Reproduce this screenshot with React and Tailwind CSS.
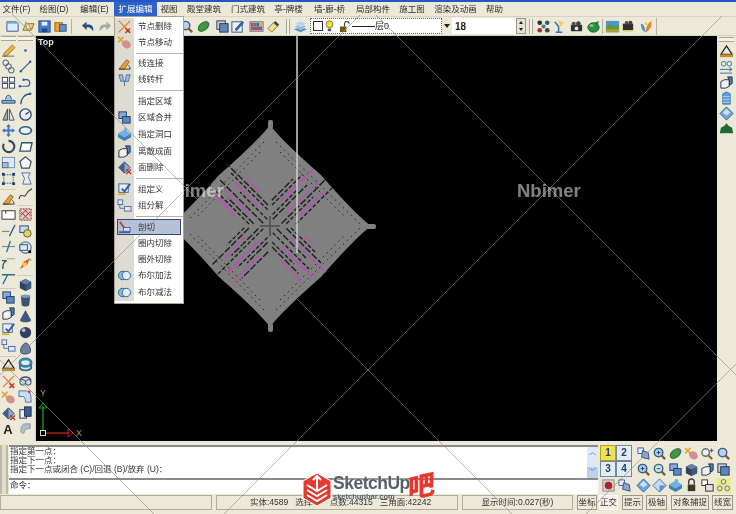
const menus = [
  { label: "文件(F)", w: "w-[33px]" },
  { label: "绘图(D)", w: "w-[42px]" },
  { label: "编辑(E)", w: "w-[39px]" },
  { label: "扩展编辑", w: "w-[43px]", active: true },
  { label: "视图", w: "w-[24px]" },
  { label: "殿堂建筑", w: "w-[46px]" },
  { label: "门式建筑", w: "w-[42px]" },
  { label: "亭-牌楼", w: "w-[39px]" },
  { label: "墙-廊-桥", w: "w-[43px]" },
  { label: "局部构件", w: "w-[44px]" },
  { label: "施工图", w: "w-[34px]" },
  { label: "渲染及动画", w: "w-[53px]" },
  { label: "帮助", w: "w-[25px]" },
];

const ICONS = {
  doc: <><path d="M2 3h10l2 2v8H2z" fill="#dfeafa" stroke="#33559a" /><path d="M2 3h12v2H2z" fill="#7fa3dc" /></>,
  open: <><path d="M2 12l3-7h9l-3 7z" fill="#f0d070" stroke="#8a7030" /><path d="M5 3l6 7-5 1z" fill="#e8e8d8" stroke="#a09060" /></>,
  save: <><rect x="2" y="2" width="12" height="12" fill="#3f7fd0" stroke="#23508f" /><rect x="5" y="3" width="6" height="4" fill="#e8eef8" /><rect x="5" y="10" width="6" height="4" fill="#1f4a88" /></>,
  print: <><rect x="2" y="4" width="8" height="9" fill="#f0a030" stroke="#a06010" /><rect x="7" y="6" width="7" height="7" fill="#5f8fd0" stroke="#2f5590" /></>,
  undo: <path d="M13 13c1-5-2-8-7-7V3L1 7l5 5V9c3-1 5 1 7 4z" fill="#24508f" />,
  redo: <path d="M3 13c-1-5 2-8 7-7V3l5 4-5 5V9c-3-1-5 1-7 4z" fill="#a8a8a0" />,
  zoom: <><circle cx="7" cy="7" r="4.5" fill="#b8d0f0" stroke="#44607f" strokeWidth="1.5" /><path d="M10 10l4 4" stroke="#806030" strokeWidth="2.4" /></>,
  zoomplus: <><circle cx="7" cy="7" r="4.5" fill="#b8d0f0" stroke="#2f5f7f" strokeWidth="1.5" /><path d="M5 7h4M7 5v4" stroke="#204060" /><path d="M10 10l4 4" stroke="#806030" strokeWidth="2.4" /></>,
  zoomminus: <><circle cx="7" cy="7" r="4.5" fill="#c8e0f0" stroke="#2f6f7f" strokeWidth="1.5" /><path d="M5 7h4" stroke="#b03020" /><path d="M10 10l4 4" stroke="#806030" strokeWidth="2.4" /></>,
  zoomstar: <><circle cx="6" cy="7" r="4" fill="#eef2e8" stroke="#607080" strokeWidth="1.5" /><path d="M9 10l4 4" stroke="#806030" strokeWidth="2.2" /><path d="M12 2l1 2 2 .5-2 1-.5 2-1-2-2-.5 2-1z" fill="#4060a0" /></>,
  leaf: <><ellipse cx="8" cy="8" rx="6.5" ry="4" transform="rotate(-40 8 8)" fill="#3f9a3f" stroke="#1f6a2f" /><path d="M11 3l3 3" stroke="#7050c0" strokeWidth="2" /></>,
  windows: <><rect x="2" y="2" width="9" height="9" fill="#c8d0e0" stroke="#303848" /><rect x="5" y="5" width="9" height="9" fill="#5f86b8" stroke="#23344f" /></>,
  edit: <><rect x="2" y="3" width="11" height="11" fill="#eef2f8" stroke="#2f4f88" /><path d="M5 11L13 2l2 2-8 9z" fill="#2f5fa8" /></>,
  palette: <><rect x="1" y="3" width="14" height="10" fill="#e0e0d0" stroke="#666" /><path d="M2 4h3v4H2z" fill="#d03090" /><path d="M5 4h3v4H5z" fill="#30a050" /><path d="M8 4h3v4H8z" fill="#3060c0" /><path d="M11 4h3v4h-3z" fill="#e0b030" /><path d="M2 8h12v4H2z" fill="#a05080" /></>,
  brush: <><path d="M10 2l4 4-2 2-4-4z" fill="#404040" /><path d="M8 4l4 4-6 6-4-4z" fill="#f0e090" stroke="#807040" /></>,
  layers: <><path d="M8 8l7 3-7 3-7-3z" fill="#5f8fc0" /><path d="M8 5l7 3-7 3-7-3z" fill="#8fb4dc" stroke="#fff" strokeWidth=".5" /><path d="M8 2l7 3-7 3-7-3z" fill="#b8d0e8" stroke="#fff" strokeWidth=".5" /></>,
  nodes: <><circle cx="4" cy="4" r="2.5" fill="#303030" /><circle cx="12" cy="4" r="2.5" fill="#306070" /><circle cx="4" cy="12" r="2.5" fill="#a03030" /><circle cx="12" cy="12" r="2.5" fill="#404040" /><circle cx="8" cy="8" r="2.2" fill="#2f8f6f" /></>,
  lamp: <><path d="M4 14h7M7 14V8L3 3" stroke="#4070b0" strokeWidth="1.6" fill="none" /><path d="M6 1l7 3-4 4z" fill="#f0d050" /></>,
  camera: <><rect x="2" y="6" width="12" height="7" rx="1" fill="#303030" /><circle cx="5" cy="5" r="2.2" fill="#505050" /><circle cx="10" cy="5" r="2.5" fill="#404040" /><circle cx="8" cy="10" r="2" fill="#e0e0e0" /></>,
  teapot: <><ellipse cx="8" cy="9" rx="6" ry="5" fill="#2f8f45" stroke="#13602a" /><path d="M9 4l5-2-2 5z" fill="#1f7a3a" /><ellipse cx="6" cy="7" rx="2" ry="1.5" fill="#7fd090" /></>,
  landscape: <><rect x="1" y="2" width="14" height="12" fill="#4f95d0" /><path d="M1 8l5-3 4 3 5-2v8H1z" fill="#5f9a40" /><path d="M1 11h14v3H1z" fill="#b0a040" /></>,
  camera2: <><rect x="2" y="5" width="11" height="7" fill="#303030" /><circle cx="6" cy="4" r="2" fill="#505050" /><circle cx="10" cy="4" r="2.2" fill="#404040" /><path d="M3 13h11" stroke="#f0e070" strokeWidth="1.5" /></>,
  wing: <><path d="M2 5c3 0 4 3 5 9-3-1-5-4-5-9z" fill="#3fa0d0" /><path d="M7 14c0-5 2-9 6-12 1 5-1 10-6 12z" fill="#f08030" /><path d="M6 5l2-2 1 4z" fill="#e0c030" /></>,
  pencil: <><path d="M3 11L12 2l3 3-9 9H3z" fill="#e8b040" stroke="#806020" strokeWidth=".7" /><path d="M1 14h13" stroke="#666" /></>,
  circles: <><circle cx="5" cy="4" r="3" fill="none" stroke="#30506f" /><circle cx="8" cy="8" r="3" fill="none" stroke="#30506f" /><circle cx="11" cy="12" r="3" fill="none" stroke="#30506f" /></>,
  grid: <><rect x="1.5" y="2.5" width="5.5" height="5" fill="#fff" stroke="#304860" /><rect x="9" y="2.5" width="5.5" height="5" fill="#fff" stroke="#304860" /><rect x="1.5" y="9" width="5.5" height="5" fill="#fff" stroke="#304860" /><rect x="9" y="9" width="5.5" height="5" fill="#fff" stroke="#304860" /></>,
  mount: <><path d="M5 9c0-6 6-6 6 0" fill="#a0c4e8" stroke="#30507f" /><path d="M1 10h14v3H1z" fill="#88acd4" stroke="#30507f" /></>,
  mirror: <><path d="M7 2v12H2z" fill="#9aa8b8" stroke="#405060" /><path d="M9 2v12h5z" fill="#e8e8e0" stroke="#405060" /></>,
  move: <path d="M8 1l2.5 3H9v3h3V5.500l3 2.500-3 2.500V9H9v3h1.500L8 15l-2.500-3H7V9H4v1.500L1 8l3-2.500V7h3V4H5.500z" fill="#3f77bf" />,
  rotate: <path d="M8 2a6 6 0 1 1-5 3" fill="none" stroke="#304860" strokeWidth="2.2" />,
  scale: <><rect x="1.5" y="2.5" width="13" height="11" fill="#dfe8f4" stroke="#7090b8" /><rect x="1.5" y="8" width="6" height="5.500" fill="#a8bcd8" stroke="#5070a0" /></>,
  dotsq: <><rect x="3" y="4" width="10" height="9" fill="none" stroke="#2f5f9f" strokeDasharray="2 1" /><rect x="1" y="2" width="3" height="3" fill="#20406f" /><rect x="12" y="2" width="3" height="3" fill="#20406f" /><rect x="1" y="12" width="3" height="3" fill="#20406f" /><rect x="12" y="12" width="3" height="3" fill="#20406f" /></>,
  pencil2: <><path d="M2 14l8-10 3 2-5 8z" fill="#e8a030" stroke="#705010" strokeWidth=".7" /><path d="M2 14h12c0-2-1-3-2-4" fill="none" stroke="#333" /></>,
  rectw: <><rect x="1" y="4" width="14" height="9" fill="#fff" stroke="#303030" /><path d="M5 4v3" stroke="#303030" /></>,
  trim: <><path d="M1 9h8" stroke="#7090a0" strokeWidth="1.3" /><path d="M15 2L9 14" stroke="#2f5f8f" strokeWidth="1.3" /></>,
  ext: <><path d="M1 8h14" stroke="#7090a0" strokeWidth="1.3" /><path d="M10 2L6 14" stroke="#2f5f8f" strokeWidth="1.3" /></>,
  fillet: <><path d="M1 6h5C2 8 2 11 2 15" fill="none" stroke="#2f5f6f" strokeWidth="1.5" /><path d="M6 4h9" stroke="#a0a0a0" /></>,
  chamfer: <><path d="M1 4h14M7 4L2 14" fill="none" stroke="#2f6f8f" strokeWidth="1.4" /></>,
  blocks: <><rect x="2" y="2" width="8" height="7" fill="#88aadc" stroke="#20406f" /><rect x="6" y="7" width="8" height="7" fill="#5f86c0" stroke="#20406f" /></>,
  boxes: <><path d="M2 7l4-2h5v7l-4 2H2z" fill="#f0f0f0" stroke="#20304f" /><path d="M9 2h5v7l-3 2V5z" fill="#5080b0" stroke="#20304f" /></>,
  group: <><rect x="2" y="2" width="10" height="9" fill="#e8eef8" stroke="#4060a0" /><path d="M5 7l3 3 6-8" fill="none" stroke="#2f5fa8" strokeWidth="2" /><path d="M1 13h8" stroke="#e0b030" strokeWidth="2" /></>,
  explode: <><rect x="1" y="2" width="5" height="5" fill="#dfe8f8" stroke="#5070a8" /><rect x="8" y="9" width="7" height="5" fill="#dfe8f8" stroke="#5070a8" /><path d="M3 7v4h5" fill="none" stroke="#5070a8" /></>,
  ruler: <><path d="M8 2l6 9H2z" fill="none" stroke="#202020" strokeWidth="1.300" /><path d="M1 11h14v3H1z" fill="#c09030" /></>,
  xnode: <><path d="M2 2l12 12M14 2L2 14" stroke="#e08030" strokeWidth="1.500" /><path d="M9 10l5 5M14 10l-5 5" stroke="#c03020" strokeWidth="1.500" /></>,
  nodemove: <><path d="M1 2l6 6M7 2L1 8" stroke="#e0a030" strokeWidth="1.600" /><ellipse cx="10" cy="10" rx="5" ry="4" transform="rotate(35 10 10)" fill="#d09090" /></>,
  facedel: <><path d="M8 2l6 6-6 6-6-6z" fill="#90a8c8" stroke="#30405f" /><path d="M2 8l6-6v12z" fill="#3f5f8f" /><path d="M10 10l5 5M15 10l-5 5" stroke="#c03020" strokeWidth="1.500" /></>,
  dot: <circle cx="8" cy="8" r="1.400" fill="#2f5f9f" />,
  line: <><path d="M3 13L13 3" stroke="#2f5f9f" strokeWidth="1.300" /><circle cx="3" cy="13" r="1.300" fill="#2f5f9f" /><circle cx="13" cy="3" r="1.300" fill="#2f5f9f" /></>,
  curve: <><path d="M2 12h7a3 3 0 0 0 0-7H6" fill="none" stroke="#2f5f9f" strokeWidth="1.300" /><circle cx="2" cy="12" r="1.300" fill="#2f5f9f" /><circle cx="6" cy="5" r="1.300" fill="#2f5f9f" /></>,
  arc: <><path d="M3 14C3 8 7 3 14 3" fill="none" stroke="#30607f" strokeWidth="1.500" /><circle cx="13" cy="3" r="1.300" fill="#2f5f9f" /></>,
  clock: <><circle cx="8" cy="8" r="6" fill="#e8eef4" stroke="#30506f" strokeWidth="1.500" /><path d="M8 8l4-3" stroke="#30506f" strokeWidth="1.500" /></>,
  ellipse: <><ellipse cx="8" cy="8" rx="6.500" ry="4" fill="#eef2f8" stroke="#2f5f8f" strokeWidth="1.500" /><path d="M1 8h2M13 8h2" stroke="#2f5f9f" /></>,
  parallel: <path d="M2 13L4 4h11l-2 9z" fill="#fff" stroke="#30506f" strokeWidth="1.400" />,
  pentagon: <path d="M8 2l6 5-2 7H4L2 7z" fill="#fff" stroke="#30506f" strokeWidth="1.300" />,
  sshape: <path d="M4 2h9l-2 4 3 8H5l2-6z" fill="#e8eef8" stroke="#5070a0" />,
  wave: <path d="M1 13c2-8 5-1 7-4s3-6 7-7" fill="none" stroke="#404850" strokeWidth="1.200" />,
  hatch: <><rect x="2" y="2" width="12" height="12" fill="#e0c8c8" stroke="#803030" strokeDasharray="2 1" /><path d="M3 9l6-6M5 13l8-8M3 5l8 8M7 3l6 6" stroke="#a03030" /></>,
  bond: <><rect x="2" y="2" width="9" height="7" fill="#c8d8f0" stroke="#304880" /><circle cx="10" cy="10" r="4" fill="#e8d060" stroke="#606020" /></>,
  target: <><circle cx="8" cy="8" r="6" fill="none" stroke="#6090c0" strokeWidth="1.600" /><rect x="2" y="5" width="8" height="6" fill="#dce8f4" stroke="#305080" /><rect x="11" y="11" width="3" height="3" fill="#111" /></>,
  spark: <><path d="M2 14l4-8 7-4-3 7z" fill="#e06030" /><path d="M5 7h4v4H5z" fill="#f0d040" /><path d="M12 3l2 2" stroke="#a0b0d0" strokeWidth="2" /></>,
  cube: <><path d="M2 5l6-3 6 3v7l-6 3-6-3z" fill="#2f4260" /><path d="M8 8l6-3v7l-6 3z" fill="#3f5a80" /><path d="M2 5l6-3 6 3-6 3z" fill="#6480a8" /></>,
  cylinder: <><path d="M3 3h10l-1 10c-1 2-7 2-8 0z" fill="#3f5270" /><ellipse cx="8" cy="3.500" rx="5" ry="1.800" fill="#8098b8" /></>,
  cone: <path d="M8 1l6 11c-1 3-11 3-12 0z" fill="#3f5a80" />,
  sphere: <><circle cx="8" cy="8" r="6" fill="#2f3f5f" /><circle cx="6" cy="5.500" r="2" fill="#a8b8d0" /></>,
  bulb: <path d="M8 2c5 1 6 8 5 10s-9 3-10 0 1-8 5-10z" fill="#6a7ea0" stroke="#3a4a68" />,
  torus: <><ellipse cx="8" cy="6" rx="6" ry="4" fill="none" stroke="#2f86b0" strokeWidth="3" /><path d="M2 8v4c2 3 10 3 12 0V8" fill="none" stroke="#2f6f98" strokeWidth="2" /></>,
  goggles: <><path d="M2 8c2-5 10-5 12 0" fill="none" stroke="#40506f" strokeWidth="1.500" /><circle cx="5" cy="10" r="3" fill="#d0dce8" stroke="#303850" /><circle cx="11" cy="10" r="3" fill="#d0dce8" stroke="#303850" /></>,
  pipe: <><path d="M1 2h8c4 0 5 4 5 12H8c0-4-1-6-3-6H1z" fill="#c8dcf0" stroke="#5070a8" /><circle cx="12" cy="3" r="1.500" fill="#e03030" /></>,
  cubes3: <><rect x="2" y="5" width="7" height="9" fill="#f0f0f0" stroke="#20304f" /><rect x="7" y="2" width="7" height="10" fill="#38608f" stroke="#20304f" /></>,
  pipegray: <path d="M13 3H8C4 3 3 7 3 12c2 2 4 1 4-1 0-2 2-3 6-3z" fill="#b4bcc8" stroke="#8898a8" />,
  stamp: <><path d="M2 2h6v6H2z" fill="#e8eef8" stroke="#4060a0" /><path d="M7 5l6 2 1 7-8-2z" fill="#90a8d0" stroke="#305088" /></>,
  hole: <><path d="M8 3l7 4-7 4-7-4z" fill="#6fb0e0" /><path d="M1 7v4l7 4v-4zM15 7v4l-7 4v-4z" fill="#3f80b8" /><circle cx="9" cy="3" r="2" fill="#6fb0e0" /></>,
  boolean: <><circle cx="6" cy="8" r="4.500" fill="#8fbbe0" stroke="#2f5f8f" /><circle cx="10" cy="8" r="4.500" fill="#dcecf8" stroke="#2f5f8f" /></>,
  cutter: <><path d="M2 13h12" stroke="#4060a0" strokeWidth="2" /><path d="M3 2l6 8" stroke="#c04030" strokeWidth="2" /><rect x="7" y="8" width="7" height="4" fill="#d8e4f4" stroke="#4060a0" /></>,
  fan: <><path d="M2 3h4l1 7H4zM10 3h4l-2 7H9z" fill="#9fc0e4" stroke="#4f7098" /><path d="M8 9v6" stroke="#4f7098" /></>,
  record: <><rect x="2" y="2" width="12" height="12" fill="#d8d4c4" stroke="#8a8a80" /><circle cx="8" cy="8" r="4" fill="#b02030" /></>,
  diamond: <><path d="M8 1l7 7-7 7-7-7z" fill="#74a4dc" stroke="#2f5f9f" /><path d="M4 7l4-4 4 4-4 3z" fill="#cfe0f4" /></>,
  diamond2: <><path d="M8 1l7 7-7 7-7-7z" fill="#c4daf2" stroke="#3f70a8" /><path d="M8 8l7 0-7 7z" fill="#5d90cc" /></>,
  lock: <><rect x="4" y="7" width="8" height="7" fill="#3a3a20" /><path d="M5 7V4a3 3 0 0 1 6 0v3" fill="none" stroke="#404040" strokeWidth="1.500" /></>,
  linked: <><rect x="2" y="2" width="6" height="6" fill="#fff" stroke="#303030" /><rect x="6" y="7" width="8" height="7" fill="#e0e0e0" stroke="#303030" /></>,
  balls: <><circle cx="8" cy="4" r="2.500" fill="none" stroke="#3f78c0" /><circle cx="4" cy="11" r="2.500" fill="none" stroke="#3f78c0" /><circle cx="12" cy="11" r="2.500" fill="none" stroke="#3f78c0" /></>,
  tree: <><path d="M8 1l7 10H1z" fill="#2f7a3a" /><path d="M2 6l6-3 6 3 1 6H1z" fill="#1f6a2f" /><path d="M7 12h2v3H7z" fill="#e8e8e8" /></>,
  building: <><path d="M4 3l4-2 4 2v11H4z" fill="#5f9fdc" stroke="#3f78b0" /><path d="M4 6h8M4 9h8M4 12h8" stroke="#cfe2f6" strokeWidth=".7" /></>,
  circlesline: <><circle cx="5" cy="4" r="2.500" fill="none" stroke="#3070a8" /><circle cx="11" cy="4" r="2.500" fill="none" stroke="#3070a8" /><path d="M1 10h12M11 8l3 2-3 2M1 14h13" fill="none" stroke="#3070a8" /></>,
};

const Icon = ({ name }) => (
  <svg viewBox="0 0 16 16" className="h-[15px] w-[15px] shrink-0">
    {ICONS[name]}
  </svg>
);

const Slot = ({ name, className = "" }) => (
  <div className={`flex h-4 w-4 shrink-0 items-center justify-center ${className}`}>
    <Icon name={name} />
  </div>
);

const Grip = () => <div className="h-[15px] w-1 shrink-0 border-x border-[#a8a594] bg-[#f4f2e8]" />;

const leftOne = [
  ["pencil", "circles", "grid", "mount", "mirror", "move", "rotate", "scale", "dotsq"],
  ["pencil2", "rectw", "trim", "ext", "fillet", "chamfer"],
  ["blocks", "boxes", "group", "explode"],
  ["ruler", "xnode", "nodemove", "facedel", "A"],
];
const leftTwo = [
  ["dot", "line", "curve", "arc", "clock", "ellipse", "parallel", "pentagon", "sshape", "wave"],
  ["hatch"],
  ["bond", "target", "spark"],
  ["cube", "cylinder", "cone", "sphere", "bulb", "torus", "goggles", "pipe", "cubes3", "pipegray"],
];

const ToolColumn = ({ groups, gaps, width }) => (
  <div className={`flex flex-col items-center ${width}`}>
    <div className="mb-px h-[5px] w-[15px] border-y border-[#a8a594] bg-[#f4f2e8]" />
    {groups.map((group, index) => (
      <div key={index} className={`flex flex-col ${gaps[index]}`}>
        {group.map((name) =>
          name === "A" ? (
            <div key={name} className="flex h-4 w-4 items-center justify-center text-[13px] font-bold leading-none text-[#222]">
              A
            </div>
          ) : (
            <Slot key={name} name={name} />
          )
        )}
      </div>
    ))}
  </div>
);

const menuRows = [
  { label: "节点删除", icon: "xnode", h: "h-[16px]" },
  { label: "节点移动", icon: "nodemove", h: "h-[16px]" },
  { sep: true, h: "h-[6px]" },
  { label: "线连接", icon: "pencil2", h: "h-[15px]" },
  { label: "线转杆", icon: "fan", h: "h-[16px]" },
  { sep: true, h: "h-[7px]" },
  { label: "指定区域", h: "h-[15px]" },
  { label: "区域合并", icon: "blocks", h: "h-[17px]" },
  { label: "指定洞口", icon: "hole", h: "h-[17px]" },
  { label: "离散成面", icon: "boxes", h: "h-[16px]" },
  { label: "面删除", icon: "facedel", h: "h-[16px]" },
  { sep: true, h: "h-[6px]" },
  { label: "组定义", icon: "group", h: "h-[16px]" },
  { label: "组分解", icon: "explode", h: "h-[16px]" },
  { sep: true, h: "h-[6px]" },
  { label: "剖切", icon: "cutter", h: "h-[16px]", active: true },
  { label: "圈内切除", h: "h-[16px]" },
  { label: "圈外切除", h: "h-[16px]" },
  { label: "布尔加法", icon: "boolean", h: "h-[17px]" },
  { label: "布尔减法", icon: "boolean", h: "h-[17px]" },
];

const Menu = () => (
  <div className="absolute left-[114px] top-[16px] z-10 flex w-[70px] flex-col border border-[#a5a294] bg-white pb-[2px] pt-[1px] text-[8.5px] text-[#333]">
    {menuRows.map((row, index) =>
      row.sep ? (
        <div key={index} className={`flex items-center ${row.h}`}>
          <div className="h-full w-[19px] bg-[#dedcd0]" />
          <div className="ml-[2px] h-px flex-1 bg-[#b4b2a8]" />
        </div>
      ) : (
        <div key={row.label} className={`relative flex items-center ${row.h}`}>
          <div className="flex h-full w-[19px] items-center justify-center bg-[#dedcd0]">
            {row.icon && <Icon name={row.icon} />}
          </div>
          <span className="relative z-10 ml-[4px]">{row.label}</span>
          {row.active && <div className="absolute inset-x-[2px] inset-y-0 border border-[#33476f] bg-[#b6c1d8]" />}
          {row.active && (
            <div className="absolute left-[2px] top-0 flex h-full items-center">
              <Icon name={row.icon} />
            </div>
          )}
        </div>
      )
    )}
  </div>
);

const armDirs = [
  [1, 1],
  [1, -1],
  [-1, 1],
  [-1, -1],
];

// cross of parallel strokes around the centre of the model
const armLines = armDirs.flatMap(([dx, dy], a) =>
  [-12, -9.5, -7, -4.5, -2, 2, 4.500, 7, 9.500, 12].map((k, i) => {
    const magenta = (i + a) % 3 === 0;
    const from = (magenta ? 12 : 3) + Math.abs(k) * 0.9;
    const to = 30 + ((i * 7 + a * 5) % 24);
    const px = -dy * k;
    const py = dx * k;
    return {
      x1: 270 + dx * from + px,
      y1: 226 + dy * from + py,
      x2: 270 + dx * to + px,
      y2: 226 + dy * to + py,
      magenta,
    };
  })
);

const Model = () => (
  <svg viewBox="36 36 681 405" className="absolute inset-0 h-full w-full">
    <path
      d="M270 125Q282 141 321 175Q355 214 371 226Q355 238 321 277Q282 311 270 327Q258 311 219 277Q185 238 169 226Q185 214 219 175Q258 141 270 125z"
      fill="#808080"
    />
    <rect x="268" y="120" width="5" height="9" rx="2" fill="#808080" />
    <rect x="268" y="323" width="5" height="9" rx="2" fill="#808080" />
    <rect x="366" y="224" width="10" height="5" rx="2" fill="#808080" />
    <g fill="none" strokeWidth="1" stroke="#222" strokeDasharray="1.500 4">
      <path d="M276 142l84 82M280 152l66 66M264 142l-76 78M260 152l-62 64" />
      <path d="M276 310l84-82M280 300l66-66M264 310l-76-78M260 300l-62-64" />
    </g>
    {armLines.map((line, index) => (
      <line
        key={index}
        x1={line.x1}
        y1={line.y1}
        x2={line.x2}
        y2={line.y2}
        stroke={line.magenta ? "#cc3fcc" : "#1c1c1c"}
        strokeWidth={line.magenta ? 1.6 : 1.4}
        strokeDasharray={index % 2 ? "4 2" : "7 2"}
      />
    ))}
    <path d="M270 216v20M260 226h20" stroke="#585858" strokeWidth="2" />
    <path d="M297 36v217" stroke="#cfcfcf" strokeWidth="1.500" />
    <path d="M43 430V406" stroke="#1f9a2f" strokeWidth="1.300" />
    <path d="M39 408l4-5 4 5z" fill="none" stroke="#1f9a2f" />
    <path d="M46 433h24" stroke="#c01c1c" strokeWidth="1.300" />
    <path d="M68 429l5 4-5 4z" fill="none" stroke="#c01c1c" />
    <rect x="40.500" y="430.500" width="5" height="5" fill="none" stroke="#d8d8d8" />
    <text x="40" y="396" fontSize="9" fill="#a8a020" fontFamily="Liberation Sans">Y</text>
    <text x="76" y="436" fontSize="9" fill="#a8a020" fontFamily="Liberation Sans">X</text>
  </svg>
);

const PanelKey = ({ label, on }) => (
  <div className={`flex h-4 w-4 items-center justify-center border text-[10px] font-bold leading-none text-[#20406f] ${on ? "border-[#b0a020] bg-[#f0e050]" : "border-[#6f88a8] bg-[#e4ecf4]"}`}>
    {label}
  </div>
);

const panelRows = [
  [{ key: "1", on: true }, { key: "2" }, "stamp", "zoomplus", "leaf", "nodemove", "zoomstar", "zoom"],
  [{ key: "3" }, { key: "4" }, "zoomplus", "zoomminus", "blocks", "cube", "boxes", "windows"],
  ["record", "stamp", "diamond", "diamond2", "hole", "lock", "linked", "balls"],
];

const statusKeys = [
  { label: "坐标", w: "w-[20px]", mr: "mr-[2px]" },
  { label: "正交", w: "w-[19px]", mr: "mr-[4px]", pressed: true },
  { label: "提示", w: "w-[21px]", mr: "mr-[3px]" },
  { label: "极轴", w: "w-[21px]", mr: "mr-[4px]" },
  { label: "对象捕捉", w: "w-[38px]", mr: "mr-[3px]" },
  { label: "线宽", w: "w-[21px]", mr: "" },
];

const Logo = () => (
  <div className="absolute left-[302px] top-[472px] z-20 flex h-[36px] w-[136px] items-start">
    <svg viewBox="0 0 30 35" className="h-[35px] w-[30px] shrink-0">
      <path d="M15 1l14 8v17l-14 8-14-8V9z" fill="#e5392f" stroke="#fff" />
      <path d="M15 5v14M11 8l4-4 4 4M5 13l10 6 10-6M5 18l10 6 10-6M5 23l10 6 10-6" fill="none" stroke="#fff" strokeWidth="2" />
    </svg>
    <div className="ml-[1px] flex w-[77px] shrink-0 flex-col">
      <span className="mt-[1px] whitespace-nowrap text-[17.5px] font-bold leading-[20px] tracking-[-0.5px] text-[#56606a] [text-shadow:0_0_2px_#fff]">SketchUp</span>
      <span className="whitespace-nowrap text-[7.5px] font-bold leading-[8px] text-[#56606a]">sketchupbar.com</span>
    </div>
    <span className="-ml-[2px] -mt-[2px] -skew-y-12 text-[27px] font-black leading-[34px] text-[#e5392f]">吧</span>
  </div>
);

const Watermarks = () => (
  <div className="pointer-events-none absolute inset-0 z-30">
    <svg viewBox="0 0 736 514" className="absolute inset-0 h-full w-full">
      <g stroke="#8c8c8c" strokeWidth=".8" opacity=".8">
        <line x1="12" y1="14" x2="512" y2="514" />
        <line x1="722" y1="16" x2="224" y2="514" />
        <line x1="360" y1="15" x2="0" y2="375" />
        <line x1="376" y1="15" x2="736" y2="375" />
        <line x1="0" y1="360" x2="154" y2="514" />
        <line x1="736" y1="364" x2="586" y2="514" />
      </g>
    </svg>
    <span className="absolute left-[160px] top-[177px] text-[18.500px] font-bold text-white/50">Nbimer</span>
    <span className="absolute left-[517px] top-[177px] text-[18.500px] font-bold text-white/50">Nbimer</span>
  </div>
);

export default function App() {
  return (
    <div className="relative flex h-[514px] w-[736px] flex-col overflow-hidden bg-[#ece9d8] font-['Liberation_Sans','Noto_Sans_CJK_SC',sans-serif] text-[8.5px] text-[#2c2c2c] blur-[0.4px]">
      <div className="h-[2px] bg-[#2456c8]" />
      <div className="flex h-[14px] items-center">
        {menus.map((menu) => (
          <div
            key={menu.label}
            className={`flex h-full items-center justify-center whitespace-nowrap ${menu.w} ${menu.active ? "bg-[#2f62c4] text-white" : ""}`}
          >
            {menu.label}
          </div>
        ))}
      </div>
      <div className="flex h-[20px] items-center border-y border-[#d6d3c2] pl-[4px]">
        <Slot name="doc" />
        <Slot name="open" />
        <Slot name="save" />
        <Slot name="print" />
        <div className="ml-[3px] mr-[8px] h-[15px] w-px bg-[#b4b1a2]" />
        <Slot name="undo" />
        <Slot name="redo" />
        <Slot name="edit" className="mr-[50px]" />
        <Slot name="zoom" />
        <Slot name="leaf" className="ml-px mr-[3px]" />
        <Slot name="windows" />
        <Slot name="edit" className="mr-[2px] -ml-px" />
        <Slot name="palette" className="ml-px" />
        <Slot name="brush" className="ml-px" />
        <div className="ml-[5px] mr-[2px]"><Grip /></div>
        <Slot name="layers" />
        <div className="ml-[2px] flex h-[16px] w-[132px] items-center gap-[2px] border border-dotted border-[#666] bg-white px-[2px]">
          <div className="h-[10px] w-[10px] shrink-0 border border-[#333] bg-white" />
          <svg viewBox="0 0 10 14" className="h-[12px] w-[9px] shrink-0">
            <circle cx="5" cy="5" r="4" fill="#f0e040" stroke="#807020" />
            <path d="M3 10h4v3H3z" fill="#555" />
          </svg>
          <svg viewBox="0 0 12 12" className="ml-[3px] h-[11px] w-[11px] shrink-0">
            <rect x="1" y="6" width="7" height="6" fill="#6a5a10" />
            <path d="M6 6V3a2.500 2.500 0 0 1 5 0" fill="none" stroke="#444" strokeWidth="1.300" />
          </svg>
          <div className="h-px w-[23px] shrink-0 bg-[#222]" />
          <span className="-ml-[2px] text-[9px] leading-none">层0</span>
        </div>
        <div className="flex h-[16px] w-[10px] items-center justify-center">
          <div className="h-0 w-0 border-x-[3px] border-t-[4px] border-x-transparent border-t-[#222]" />
        </div>
        <div className="flex h-[16px] w-[64px] items-center bg-white pl-[3px] text-[10px] font-bold text-[#222]">18</div>
        <div className="flex h-[16px] w-[10px] flex-col border border-[#9a978a] bg-[#e4e2d6]">
          <div className="flex flex-1 items-center justify-center"><div className="h-0 w-0 border-x-[2px] border-b-[3px] border-x-transparent border-b-[#222]" /></div>
          <div className="flex flex-1 items-center justify-center"><div className="h-0 w-0 border-x-[2px] border-t-[3px] border-x-transparent border-t-[#222]" /></div>
        </div>
        <div className="ml-[3px] mr-[2px]"><Grip /></div>
        <Slot name="nodes" />
        <Slot name="lamp" />
        <Slot name="camera" className="ml-px" />
        <Slot name="teapot" className="ml-px" />
        <div className="mx-px h-[15px] w-px bg-[#b4b1a2]" />
        <Slot name="landscape" />
        <Slot name="camera2" />
        <Slot name="wing" className="ml-[2px]" />
        <div className="ml-[2px] h-[17px] w-px bg-[#b4b1a2]" />
      </div>
      <div className="flex h-[405px]">
        <div className="flex w-[36px] shrink-0 border-r border-[#d6d3c2]">
          <ToolColumn width="w-[16px]" groups={leftOne} gaps={["", "mt-[3px] border-t border-[#cfccba]", "mt-[2px] border-t border-[#cfccba]", "mt-[3px] border-t border-[#cfccba]"]} />
          <ToolColumn width="w-[18px]" groups={leftTwo} gaps={["", "mt-[3px] border-t border-[#cfccba]", "mt-px", "mt-[4px] border-t border-[#cfccba]"]} />
        </div>
        <div className="relative flex-1 bg-black">
          <Model />
          <span className="absolute left-[2px] top-0 text-[9px] font-bold text-[#e4e4e4]">Top</span>
        </div>
        <div className="flex w-[19px] shrink-0 flex-col items-center">
          <div className="mb-[2px] mt-[1px] h-[5px] w-[15px] border-y border-[#a8a594] bg-[#f4f2e8]" />
          {["ruler", "circlesline", "boxes", "building", "diamond", "tree"].map((name) => (
            <div key={name} className="flex h-[15.5px] w-4 items-center justify-center">
              <Icon name={name} />
            </div>
          ))}
        </div>
      </div>
      <div className="flex h-[53px] pt-[4px]">
        <div className="mr-px w-[8px] shrink-0 border-x-2 border-[#bdbaaa] bg-[#e2dfce]" />
        <div className="flex w-[589px] shrink-0 flex-col border-t-2 border-[#8a8a86] bg-white">
          <div className="flex h-[33px] border-b-2 border-[#8a8a86]">
            <div className="flex-1 pl-[1px] text-[8.5px] leading-[9px] text-[#333]">
              <p>指定第一点：</p>
              <p>指定下一点：</p>
              <p>指定下一点或闭合 (C)/回退 (B)/放弃 (U)：</p>
            </div>
            <div className="flex w-[11px] flex-col items-center bg-[#dfe8f8]">
              <div className="flex h-[11px] w-full items-center justify-center text-[7px] text-[#3f66b0]">︿</div>
              <div className="mt-auto flex h-[11px] w-full items-center justify-center bg-[#bed0f0] text-[7px] text-[#3f66b0]">﹀</div>
            </div>
          </div>
          <div className="flex h-[14px] items-center pb-[3px] pl-[1px] leading-none">命令：</div>
        </div>
        <div className="ml-[2px] flex flex-col">
          {panelRows.map((row, rowIndex) => (
            <div key={rowIndex} className="flex">
              {row.map((item, index) => (
                <div key={index} className={`flex h-4 w-4 items-center justify-center ${index === 2 ? "ml-[3px]" : ""}`}>
                  {typeof item === "string" ? (
                    rowIndex === 2 && index === 7 ? (
                      <div className="bg-[#f0e88a]"><Icon name={item} /></div>
                    ) : (
                      <Icon name={item} />
                    )
                  ) : (
                    <PanelKey label={item.key} on={item.on} />
                  )}
                </div>
              ))}
            </div>
          ))}
        </div>
      </div>
      <div className="mt-[1px] flex h-[15px] items-stretch text-[#333]">
        <div className="mr-[4px] w-[212px] border border-[#b0ad9c]" />
        <div className="mr-[4px] flex w-[242px] items-center gap-[7px] whitespace-nowrap border border-[#b0ad9c] pl-[33px]">
          <span>实体:4589</span>
          <span>选择:</span>
          <span className="ml-[8px]">点数:44315</span>
          <span>三角面:42242</span>
        </div>
        <div className="mr-[4px] flex w-[111px] items-center justify-center border border-[#b0ad9c]">显示时间:0.027(秒)</div>
        {statusKeys.map((key) => (
          <div
            key={key.label}
            className={`flex items-center justify-center border ${key.w} ${key.mr} ${key.pressed ? "border-[#fff] bg-[#f4f2e8]" : "border-[#9a978a]"}`}
          >
            {key.label}
          </div>
        ))}
      </div>
      <Menu />
      <Logo />
      <Watermarks />
    </div>
  );
}
